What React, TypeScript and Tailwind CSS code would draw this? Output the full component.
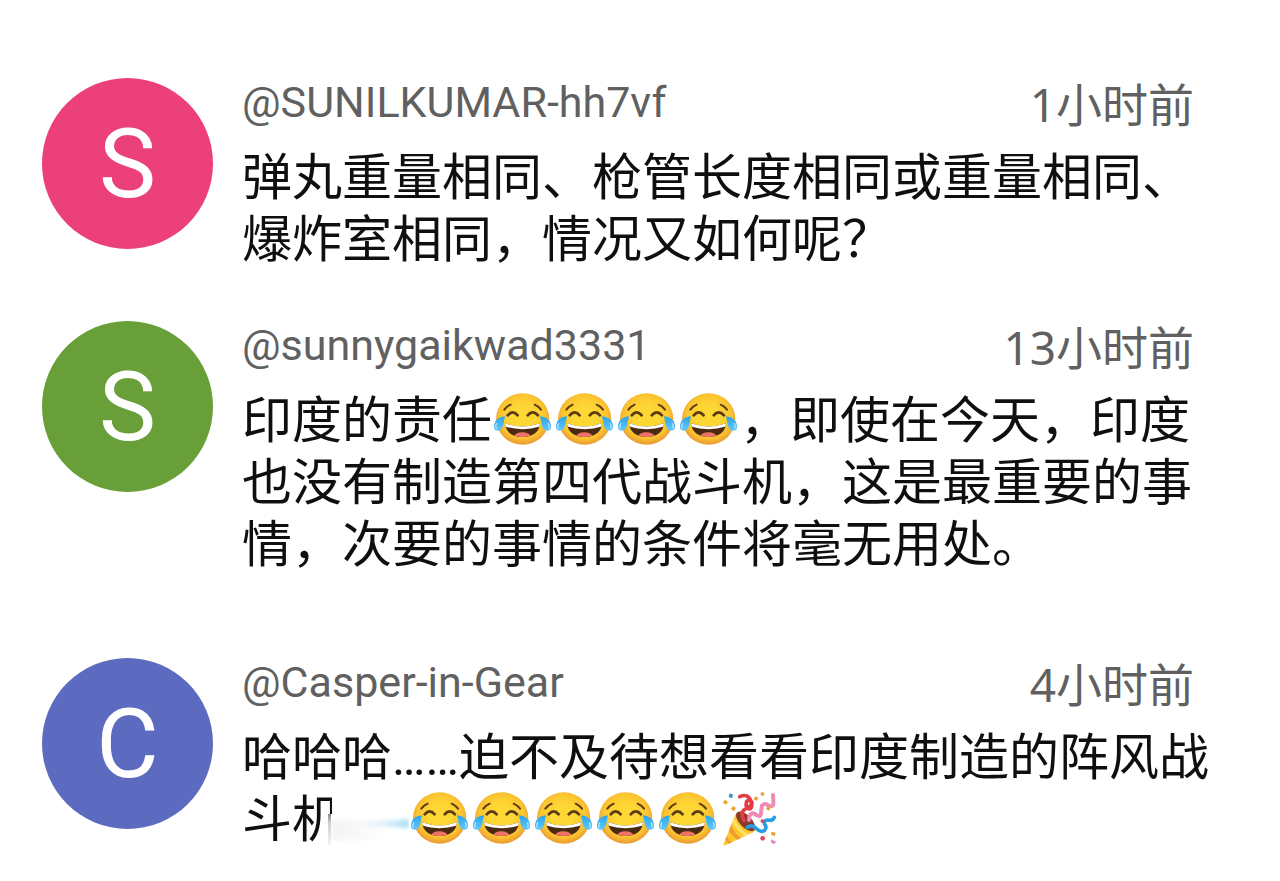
import type { ReactNode } from "react";

function Joy() {
  return (
    <svg
      role="img"
      aria-label="😂"
      viewBox="33 38 186 156"
      className="inline-block h-[58px] w-[62px] align-top"
    >
      <defs>
        <radialGradient id="joy-face" cx="0.5" cy="0.45" r="0.53">
          <stop offset="0.4" stopColor="#fdd835" />
          <stop offset="0.8" stopColor="#fbc42f" />
          <stop offset="1" stopColor="#ec9f34" />
        </radialGradient>
        <linearGradient id="joy-tear" x1="0" y1="0" x2="0" y2="1">
          <stop offset="0" stopColor="#2ba4e8" />
          <stop offset="1" stopColor="#62c8fa" />
        </linearGradient>
        <clipPath id="joy-mouth">
          <path d="M72 129 Q124 148 177 129 Q174 169 124 170 Q76 169 72 129Z" />
        </clipPath>
      </defs>
      <ellipse cx="125" cy="116" rx="80" ry="77" fill="url(#joy-face)" />
      <g fill="none" stroke="#5c3a14" strokeLinecap="round">
        <path d="M70 88 Q77 78 89 73" strokeWidth="6" />
        <path d="M161 73 Q173 78 180 88" strokeWidth="6" />
        <path d="M80 105 Q95 87 110 105" strokeWidth="8" />
        <path d="M140 105 Q155 87 171 105" strokeWidth="8" />
      </g>
      <g clipPath="url(#joy-mouth)">
        <rect x="70" y="120" width="110" height="55" fill="#4b2a12" />
        <path d="M70 122 H179 V138 Q124 155 70 138Z" fill="#fff" />
        <ellipse cx="124" cy="168" rx="24" ry="12" fill="#ef7467" />
      </g>
      <path d="M72 108 Q46 111 40 130 Q35 148 49 151 Q63 151 67 133 Q69 121 72 108Z" fill="url(#joy-tear)" />
      <path d="M177 108 Q203 111 209 130 Q214 148 200 151 Q186 151 182 133 Q180 121 177 108Z" fill="url(#joy-tear)" />
      <path d="M47 130 Q42 138 46 143" fill="none" stroke="#a8e4ff" strokeWidth="4" strokeLinecap="round" />
      <path d="M202 130 Q207 138 203 143" fill="none" stroke="#a8e4ff" strokeWidth="4" strokeLinecap="round" />
    </svg>
  );
}

function Party() {
  return (
    <svg
      role="img"
      aria-label="🎉"
      viewBox="357 38 186 156"
      className="inline-block h-[58px] w-[62px] overflow-visible align-top"
    >
      <path d="M371 193 L405 108 Q410 97 421 103 L464 147 Q469 154 459 159 L376 198 Q369 200 371 193Z" fill="#fdc92f" />
      <path d="M394 137 Q404 165 423 176 L412 181 Q393 168 387 153Z" fill="#f59b2d" />
      <path d="M402 116 Q414 147 445 165 L436 170 Q409 153 398 127Z" fill="#ffe36b" />
      <path d="M380 171 Q385 185 397 188 L386 193 Q378 187 376 181Z" fill="#f59b2d" />
      <ellipse cx="437" cy="126" rx="37" ry="18" transform="rotate(46 437 126)" fill="#8a3a2b" />
      <g fill="none" strokeLinecap="round">
        <path d="M432 123 Q420 99 434 90 Q454 82 456 70 Q452 58 440 66 Q434 86 447 89 Q459 88 454 69 Q446 40 419 52" stroke="#e53b42" strokeWidth="11" />
        <path d="M447 122 Q447 98 463 103 Q480 117 483 104 Q484 88 486 79 Q495 69 506 79 Q522 85 520 68 L519 47" stroke="#ee8cb6" strokeWidth="12" />
        <path d="M442 144 Q456 134 468 147 Q485 161 494 153 Q502 144 493 133 Q492 121 505 122 Q517 126 523 114" stroke="#279fe3" strokeWidth="11" />
      </g>
      <g fill="#e9a32f">
        <path d="M374 61 L384 68 L378 76 L369 70Z" />
        <path d="M399 80 L408 86 L402 96 L393 89Z" />
        <path d="M466 51 L475 55 L471 64 L461 60Z" />
        <path d="M484 38 L494 41 L491 50 L481 47Z" />
        <path d="M502 80 L512 85 L507 94 L498 89Z" />
        <path d="M515 157 L527 160 L524 170 L513 167Z" />
      </g>
      <path d="M389 42 L399 46 L396 57 L386 53Z" fill="#3693c9" />
      <path d="M484 119 L494 123 L490 132 L481 128Z" fill="#d8434f" />
      <circle cx="488" cy="177" r="7" fill="#df4657" />
      <path d="M514 180 L529 187 L522 195 L512 189Z" fill="#dd91cc" />
    </svg>
  );
}

// blank stretch with a soft blue streak, it also fades out the glyph before it
function Smear() {
  return (
    <span className="relative inline-block h-[58px] w-[67px] align-top">
      <svg viewBox="0 0 82 58" className="absolute top-0 right-0 h-[58px] w-[82px] max-w-none" aria-hidden="true">
        <defs>
          <linearGradient id="smear-edge" x1="0" y1="0" x2="0" y2="1">
            <stop offset="0" stopColor="#8a8a8a" />
            <stop offset="0.3" stopColor="#d0d0d0" />
            <stop offset="1" stopColor="#f4f4f4" />
          </linearGradient>
          <linearGradient id="smear-haze" x1="0" y1="0" x2="1" y2="0">
            <stop offset="0" stopColor="#f3f3f3" />
            <stop offset="1" stopColor="#ffffff" />
          </linearGradient>
          <linearGradient id="smear-tail" x1="0" y1="0" x2="1" y2="0">
            <stop offset="0" stopColor="#d9f0fa" stopOpacity="0" />
            <stop offset="1" stopColor="#a5dbf3" />
          </linearGradient>
          <filter id="smear-soft" x="-20%" y="-100%" width="140%" height="300%">
            <feGaussianBlur stdDeviation="2" />
          </filter>
        </defs>
        <path d="M5 0 H82 V58 H0 V25 H5Z" fill="#fff" />
        <rect x="5" y="31" width="55" height="20" fill="url(#smear-haze)" filter="url(#smear-soft)" />
        <rect x="1" y="25" width="3" height="31" fill="url(#smear-edge)" />
        <path d="M14 35 Q60 33 82 30 V39 Q60 37 14 35Z" fill="url(#smear-tail)" filter="url(#smear-soft)" />
      </svg>
    </span>
  );
}

type Comment = {
  user: string;
  letter: string;
  color: string;
  time: string;
  spacing: string;
  body: ReactNode;
};

const comments: Comment[] = [
  {
    user: "@SUNILKUMAR-hh7vf",
    letter: "S",
    color: "bg-[#ec407a]",
    time: "1小时前",
    spacing: "mb-[50px]",
    body: "弹丸重量相同、枪管长度相同或重量相同、爆炸室相同，情况又如何呢？",
  },
  {
    user: "@sunnygaikwad3331",
    letter: "S",
    color: "bg-[#689f38]",
    time: "13小时前",
    spacing: "mb-[82px]",
    body: (
      <>
        印度的责任
        <Joy />
        <Joy />
        <Joy />
        <Joy />
        ，即使在今天，印度也没有制造第四代战斗机，这是最重要的事情，次要的事情的条件将毫无用处。
      </>
    ),
  },
  {
    user: "@Casper-in-Gear",
    letter: "C",
    color: "bg-[#5c6bc0]",
    time: "4小时前",
    spacing: "",
    body: (
      <>
        哈哈哈……迫不及待想看看印度制造的阵风战斗机
        <Smear />
        <Joy />
        <Joy />
        <Joy />
        <Joy />
        <Joy />
        <Party />
      </>
    ),
  },
];

export default function App() {
  return (
    <main lang="zh-CN" className="min-h-screen bg-white pt-[78px] pr-[70px] pl-[42px]">
      <ul>
        {comments.map((c) => (
          <li key={c.user} className={`flex items-start gap-[29px] ${c.spacing}`}>
            <div
              className={`flex size-[171px] shrink-0 items-center justify-center rounded-full font-['Roboto',sans-serif] text-[96px] leading-none text-white ${c.color}`}
            >
              {c.letter}
            </div>
            <div className="min-w-0 flex-1">
              <div className="flex h-[69px] items-start justify-between pr-4 text-[#606060]">
                <span className="font-['Roboto',sans-serif] text-[43px] leading-[48px]">{c.user}</span>
                <span className="font-['Noto_Sans','Noto_Sans_CJK_SC',sans-serif] text-[46px] leading-[52px]">
                  {c.time}
                </span>
              </div>
              <p className="font-['Roboto','Noto_Sans_CJK_SC',sans-serif] text-[50px] leading-[62px] text-[#0f0f0f]">
                {c.body}
              </p>
            </div>
          </li>
        ))}
      </ul>
    </main>
  );
}
